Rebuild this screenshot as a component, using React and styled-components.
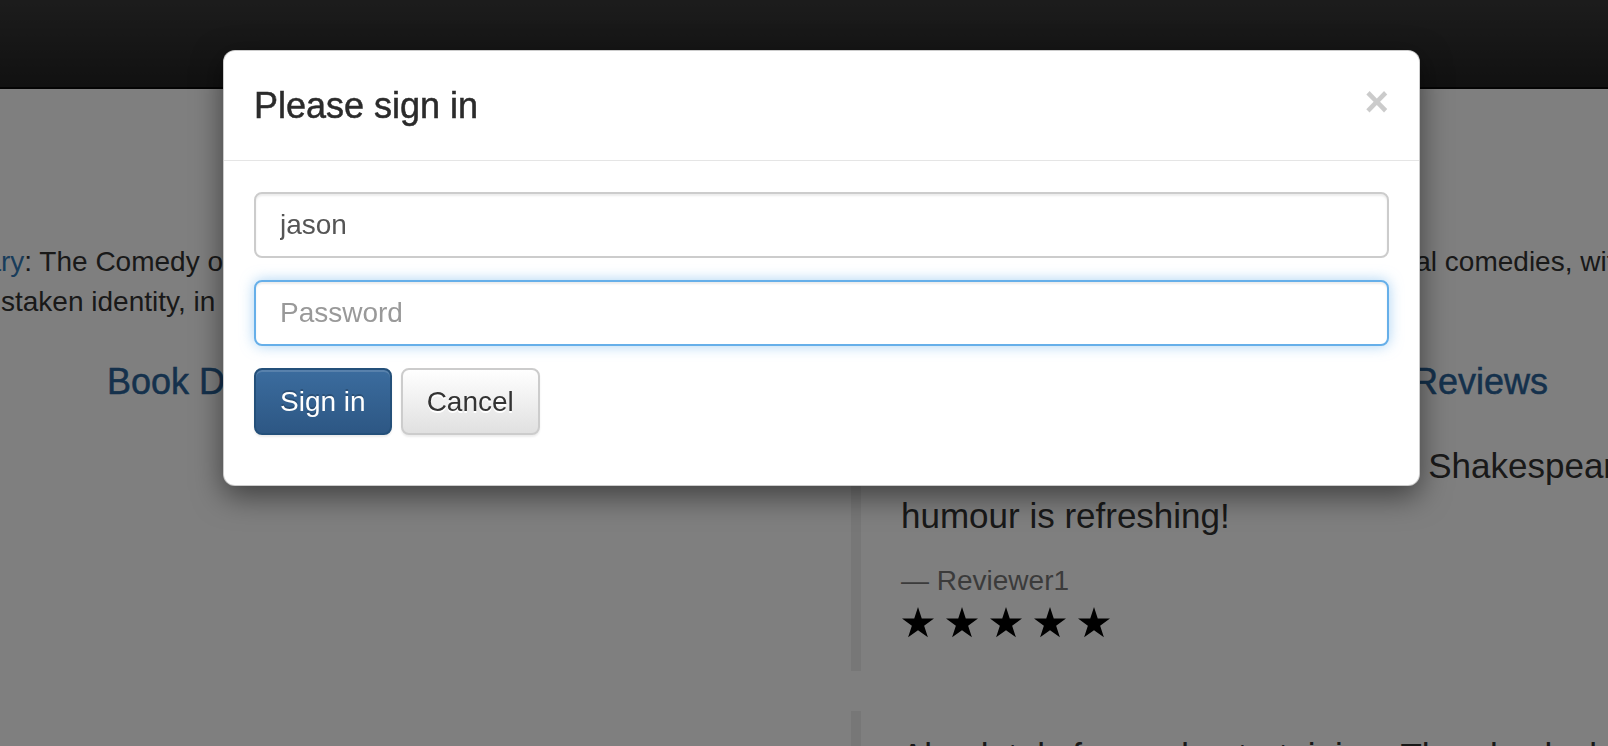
import styled, { createGlobalStyle, css } from 'styled-components'

const GlobalStyle = createGlobalStyle`
  html, body {
    margin: 0;
    padding: 0;
    overflow: hidden;
    background: #fff;
  }
  body {
    font-family: "Liberation Sans", Arial, Helvetica, sans-serif;
    font-size: 28px;
    line-height: 1.42857;
    color: #333;
  }
  * {
    box-sizing: border-box;
  }
`

// the page is rendered at 2x and scrolled, only a slice of it is in view
const Page = styled.div`
  width: 2452px;
  margin: -11px 0 0 -405px;
`

const Navbar = styled.nav`
  height: 100px;
  margin-bottom: 40px;
  background-image: linear-gradient(to bottom, #3c3c3c 0, #222 100%);
  border-bottom: 2px solid #080808;
`

const Container = styled.div`
  display: flow-root;
  padding: 0 30px;
`

const BookTitle = styled.h3`
  margin: 40px 0 20px;
  font-size: 48px;
  font-weight: 500;
  line-height: 1.1;
  text-align: center;
  color: #337ab7;
`

const Summary = styled.p`
  margin: 0 0 20px;
  padding: 0 15px;
`

const Link = styled.a`
  color: #337ab7;
  text-decoration: none;
`

const Row = styled.div`
  display: grid;
  grid-template-columns: 1fr 1fr;
  margin: 0 -30px;
`

const Col = styled.div`
  padding: 0 30px;
`

const SectionTitle = styled.h4`
  margin: 20px 0;
  font-size: 36px;
  font-weight: 500;
  line-height: 1.1;
  text-align: center;
  color: #2a6298;
  -webkit-text-stroke: 0.5px #2a6298;
`

const Review = styled.blockquote`
  margin: 0 0 40px;
  padding: 20px 40px;
  border-left: 10px solid #eee;
  font-size: 35px;
  line-height: 1.42857;
`

const ReviewText = styled.p`
  margin: 0 0 20px;
`

const Reviewer = styled.footer`
  font-size: 28px;
  line-height: 1.42857;
  color: #777;

  &:before {
    content: '\\2014 \\00A0';
  }
`

const Stars = styled.div`
  display: flex;
  gap: 10px;
  height: 50px;
  padding-top: 6px;
`

const Backdrop = styled.div`
  position: fixed;
  inset: 0;
  background: rgba(0, 0, 0, 0.5);
`

const Dialog = styled.div`
  position: fixed;
  top: 50px;
  left: 223px;
  width: 1197px;
  background: #fff;
  border: 1px solid rgba(0, 0, 0, 0.2);
  border-radius: 12px;
  box-shadow: 0 10px 30px rgba(0, 0, 0, 0.5);
`

const DialogHeader = styled.div`
  display: flex;
  justify-content: space-between;
  align-items: flex-start;
  padding: 29px 30px;
  border-bottom: 1px solid #e5e5e5;
`

const DialogTitle = styled.h4`
  margin: 0;
  font-size: 36px;
  font-weight: 500;
  line-height: 51px;
  color: #2b2b2b;
  -webkit-text-stroke: 0.5px #2b2b2b;
`

const Close = styled.button`
  margin-top: 1px;
  padding: 0;
  border: 0;
  background: none;
  font-family: "Liberation Sans", Arial, sans-serif;
  font-size: 42px;
  font-weight: bold;
  line-height: 1;
  color: #000;
  opacity: 0.2;
  text-shadow: 0 2px 0 #fff;
  cursor: pointer;
`

const DialogBody = styled.form`
  padding: 31px 30px 50px;
`

const Input = styled.input`
  display: block;
  width: 100%;
  height: 66px;
  padding: 12px 24px;
  font-family: "Liberation Sans", Arial, sans-serif;
  font-size: 28px;
  line-height: 1.42857;
  color: #555;
  background: #fff;
  border: 2px solid ${(p) => (p.$focused ? '#66afe9' : '#ccc')};
  border-radius: 8px;
  box-shadow: inset 0 2px 2px rgba(0, 0, 0, 0.075)
    ${(p) => (p.$focused ? ', 0 0 14px rgba(102, 175, 233, 0.55)' : '')};
  outline: none;

  & + & {
    margin-top: 22px;
  }
  &::placeholder {
    color: #999;
  }
`

const Actions = styled.div`
  display: flex;
  gap: 9px;
  margin-top: 22px;
`

const Button = styled.button`
  height: 67px;
  padding: 0 24px;
  font-family: "Liberation Sans", Arial, sans-serif;
  font-size: 28px;
  line-height: 40px;
  border-radius: 8px;
  border: 2px solid;
  cursor: pointer;

  ${(p) =>
    p.$primary
      ? css`
          color: #fff;
          border-color: #24507a;
          background-image: linear-gradient(to bottom, #3b6c9e 0, #2d5784 100%);
          text-shadow: 0 -2px 0 rgba(0, 0, 0, 0.2);
          box-shadow: inset 0 2px 0 rgba(255, 255, 255, 0.15), 0 2px 2px rgba(0, 0, 0, 0.075);
        `
      : css`
          color: #333;
          border-color: #ccc;
          background-image: linear-gradient(to bottom, #fff 0, #e0e0e0 100%);
          text-shadow: 0 2px 0 #fff;
          box-shadow: inset 0 2px 0 rgba(255, 255, 255, 0.15), 0 2px 2px rgba(0, 0, 0, 0.075);
        `}
`

const Star = () => (
  <svg width="34" height="31" viewBox="0 0 100 95">
    <polygon
      points="50,0 61.5,35.5 99,35.5 68.8,57.5 80.3,93 50,71 19.7,93 31.2,57.5 1,35.5 38.5,35.5"
      fill="#000"
    />
  </svg>
)

const reviews = [
  {
    text: 'An extremely entertaining play by Shakespeare. The slapstick humour is refreshing!',
    reviewer: 'Reviewer1',
    rating: 5,
  },
  {
    text: 'Absolutely fun and entertaining. The play lacks thematic depth when compared to other plays by Shakespeare.',
    reviewer: 'Reviewer2',
    rating: 4,
  },
]

const App = () => {
  return (
    <>
      <GlobalStyle />
      <Page>
        <Navbar />
        <Container>
          <BookTitle>The Comedy of Errors</BookTitle>
          <Summary>
            Summary: <Link href="#">Wikipedia Summary</Link>: The Comedy of Errors is one of{' '}
            <b>William Shakespeare's</b> early plays. It is his shortest and one of his most farcical
            comedies, with a major part of the humour coming from slapstick and mistaken identity, in
            addition to puns and word play.
          </Summary>
          <Row>
            <Col>
              <SectionTitle>Book Details</SectionTitle>
            </Col>
            <Col>
              <SectionTitle>Book Reviews</SectionTitle>
              {reviews.map((r) => (
                <Review key={r.reviewer}>
                  <ReviewText>{r.text}</ReviewText>
                  <Reviewer>{r.reviewer}</Reviewer>
                  <Stars>
                    {Array.from({ length: r.rating }).map((_, i) => (
                      <Star key={i} />
                    ))}
                  </Stars>
                </Review>
              ))}
            </Col>
          </Row>
        </Container>
      </Page>

      <Backdrop />
      <Dialog>
        <DialogHeader>
          <DialogTitle>Please sign in</DialogTitle>
          <Close type="button">×</Close>
        </DialogHeader>
        <DialogBody onSubmit={(e) => e.preventDefault()}>
          <Input type="text" defaultValue="jason" />
          <Input type="password" placeholder="Password" $focused />
          <Actions>
            <Button type="submit" $primary>Sign in</Button>
            <Button type="button">Cancel</Button>
          </Actions>
        </DialogBody>
      </Dialog>
    </>
  )
}

export default App
